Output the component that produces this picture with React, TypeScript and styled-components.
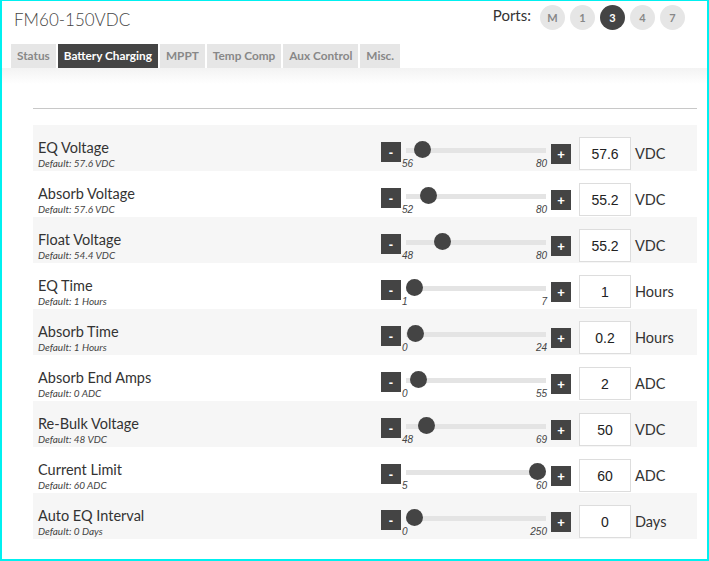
import React from "react";
import styled, { createGlobalStyle, css } from "styled-components";

const GlobalStyle = createGlobalStyle`
  html, body {
    margin: 0;
    padding: 0;
    background: #fff;
  }
  body {
    font-family: "Lato", "Liberation Sans", sans-serif;
    color: #333;
  }
`;

const Page = styled.div`
  box-sizing: border-box;
  width: 709px;
  height: 561px;
  border: 2px solid #00f0f0;
  border-top-width: 1px;
  overflow: hidden;
  display: flex;
  flex-direction: column;
`;

const Header = styled.div`
  display: flex;
  justify-content: space-between;
  align-items: flex-start;
  padding: 0 22px 0 11px;
  height: 43px;
`;

const Title = styled.h1`
  margin: 8px 0 0 1px;
  font-size: 17px;
  line-height: 22px;
  font-weight: 300;
  color: #444;
`;

const Ports = styled.div`
  display: flex;
  align-items: center;
  gap: 5px;
  margin-top: 4px;
`;

const PortsLabel = styled.span`
  font-size: 15px;
  color: #333;
  margin-right: 4px;
  margin-top: -6px;
`;

const Port = styled.span<{ $active?: boolean }>`
  width: 25px;
  height: 25px;
  border-radius: 50%;
  display: flex;
  align-items: center;
  justify-content: center;
  font-size: 11px;
  font-weight: 700;
  background: #e6e6e6;
  color: #888;
  ${(p) =>
    p.$active &&
    css`
      background: #444;
      color: #fff;
    `}
`;

const Tabs = styled.div`
  display: flex;
  gap: 2px;
  padding-left: 9px;
`;

const Tab = styled.div<{ $active?: boolean }>`
  height: 24px;
  line-height: 24px;
  padding: 0 6px;
  font-size: 11.8px;
  font-weight: 700;
  background: #e6e6e6;
  color: #888;
  ${(p) =>
    p.$active &&
    css`
      background: #444;
      color: #fff;
    `}
`;

const Panel = styled.div`
  flex: 1;
  background: linear-gradient(#f3f3f3 0, #fff 16px);
  padding: 40px 10px 0 31px;
`;

const Rule = styled.div`
  height: 1px;
  background: #c8c8c8;
  margin-bottom: 16px;
`;

const Row = styled.div<{ $shade?: boolean }>`
  display: flex;
  align-items: flex-start;
  height: 46px;
  background: ${(p) => (p.$shade ? "#f6f6f6" : "#fff")};
`;

const LabelBlock = styled.div`
  flex: 1;
  padding: 14px 0 0 5px;
`;

const Label = styled.div`
  font-size: 14.5px;
  line-height: 18px;
  color: #333;
`;

const DefaultText = styled.div`
  font-size: 10px;
  line-height: 12px;
  font-style: italic;
  color: #444;
`;

const StepButton = styled.div<{ $plus?: boolean }>`
  width: 20px;
  height: 20px;
  margin-top: ${(p) => (p.$plus ? "19px" : "17px")};
  background: #444;
  color: #fff;
  font-family: "Liberation Sans", sans-serif;
  font-size: 13px;
  font-weight: 700;
  display: flex;
  align-items: center;
  justify-content: center;
`;

const SliderCol = styled.div`
  width: 150px;
  margin-top: 16px;
`;

const Track = styled.div`
  position: relative;
  height: 17px;
  margin: 0 5px;
  &::before {
    content: "";
    position: absolute;
    left: 0;
    right: 0;
    top: 7px;
    height: 5px;
    background: #e4e4e4;
  }
`;

const Thumb = styled.div`
  position: absolute;
  top: 0;
  width: 17px;
  height: 17px;
  margin-left: -8.5px;
  border-radius: 50%;
  background: #444;
`;

const Bounds = styled.div`
  display: flex;
  justify-content: space-between;
  padding: 0 4px 0 1px;
  font-family: "Liberation Sans", sans-serif;
  font-style: italic;
  font-size: 10px;
  line-height: 12px;
  color: #444;
`;

const ValueBox = styled.div`
  box-sizing: border-box;
  width: 52px;
  height: 33px;
  margin: 12px 0 0 8px;
  border: 1px solid #ddd;
  background: #fff;
  display: flex;
  align-items: center;
  justify-content: center;
  font-family: "Liberation Sans", sans-serif;
  font-size: 14px;
  color: #222;
`;

const Unit = styled.div`
  width: 62px;
  padding-left: 4px;
  margin-top: 12px;
  line-height: 33px;
  font-size: 14.5px;
  color: #333;
`;

type Setting = {
  name: string;
  def: string;
  min: number;
  max: number;
  value: string;
  unit: string;
};

const settings: Setting[] = [
  { name: "EQ Voltage", def: "57.6 VDC", min: 56, max: 80, value: "57.6", unit: "VDC" },
  { name: "Absorb Voltage", def: "57.6 VDC", min: 52, max: 80, value: "55.2", unit: "VDC" },
  { name: "Float Voltage", def: "54.4 VDC", min: 48, max: 80, value: "55.2", unit: "VDC" },
  { name: "EQ Time", def: "1 Hours", min: 1, max: 7, value: "1", unit: "Hours" },
  { name: "Absorb Time", def: "1 Hours", min: 0, max: 24, value: "0.2", unit: "Hours" },
  { name: "Absorb End Amps", def: "0 ADC", min: 0, max: 55, value: "2", unit: "ADC" },
  { name: "Re-Bulk Voltage", def: "48 VDC", min: 48, max: 69, value: "50", unit: "VDC" },
  { name: "Current Limit", def: "60 ADC", min: 5, max: 60, value: "60", unit: "ADC" },
  { name: "Auto EQ Interval", def: "0 Days", min: 0, max: 250, value: "0", unit: "Days" },
];

const tabs = ["Status", "Battery Charging", "MPPT", "Temp Comp", "Aux Control", "Misc."];
const ports = ["M", "1", "3", "4", "7"];

const SettingRow = ({ s, shade }: { s: Setting; shade: boolean }) => {
  const frac = (parseFloat(s.value) - s.min) / (s.max - s.min);
  // thumb travels inside the track, keeping half its width from each end
  const left = 8.5 + frac * 123;
  return (
    <Row $shade={shade}>
      <LabelBlock>
        <Label>{s.name}</Label>
        <DefaultText>Default: {s.def}</DefaultText>
      </LabelBlock>
      <StepButton>-</StepButton>
      <SliderCol>
        <Track>
          <Thumb style={{ left: `${left}px` }} />
        </Track>
        <Bounds>
          <span>{s.min}</span>
          <span>{s.max}</span>
        </Bounds>
      </SliderCol>
      <StepButton $plus>+</StepButton>
      <ValueBox>{s.value}</ValueBox>
      <Unit>{s.unit}</Unit>
    </Row>
  );
};

export default function App() {
  return (
    <>
      <GlobalStyle />
      <Page>
        <Header>
          <Title>FM60-150VDC</Title>
          <Ports>
            <PortsLabel>Ports:</PortsLabel>
            {ports.map((p) => (
              <Port key={p} $active={p === "3"}>
                {p}
              </Port>
            ))}
          </Ports>
        </Header>
        <Tabs>
          {tabs.map((t) => (
            <Tab key={t} $active={t === "Battery Charging"}>
              {t}
            </Tab>
          ))}
        </Tabs>
        <Panel>
          <Rule />
          {settings.map((s, i) => (
            <SettingRow key={s.name} s={s} shade={i % 2 === 0} />
          ))}
        </Panel>
      </Page>
    </>
  );
}
